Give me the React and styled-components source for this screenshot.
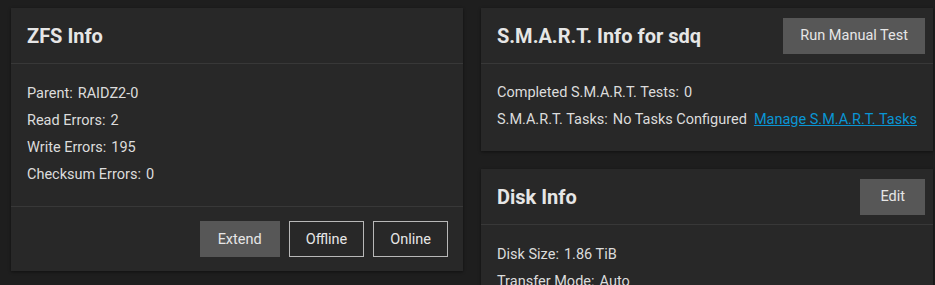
import React from 'react'
import styled, { createGlobalStyle } from 'styled-components'

const GlobalStyle = createGlobalStyle`
  html, body {
    margin: 0;
    padding: 0;
    background: #1e1e1e;
    overflow: hidden;
  }
  body {
    font-family: Roboto, "Noto Sans", sans-serif;
    color: #e0e0e0;
  }
`

const Page = styled.div`
  display: grid;
  grid-template-columns: 452px 452px;
  column-gap: 18px;
  align-items: start;
  padding: 8px 0 0 11px;
`

const Column = styled.div`
  display: flex;
  flex-direction: column;
  gap: 18px;
`

const Card = styled.section`
  background: #282828;
  box-shadow: 0 1px 3px rgba(0, 0, 0, 0.45);
`

const Header = styled.header`
  height: 56px;
  box-sizing: border-box;
  display: flex;
  align-items: center;
  justify-content: space-between;
  padding: 0 8px 0 16px;
  border-bottom: 1px solid #383838;
`

const Title = styled.h2`
  margin: 0;
  font-size: 20px;
  font-weight: 700;
  color: #e6e6e6;
`

const Body = styled.div`
  padding: ${({ top }) => top || 15}px 16px ${({ bottom }) => bottom || 18}px;
`

const Row = styled.div`
  height: 27px;
  display: flex;
  align-items: center;
  font-size: 14.5px;
  color: #dcdcdc;
`

const Label = styled.span`
  margin-right: 5px;
`

const Link = styled.a`
  margin-left: auto;
  color: #0a95d4;
  text-decoration: underline;
  cursor: pointer;
`

const Footer = styled.footer`
  display: flex;
  justify-content: flex-end;
  align-items: center;
  gap: 9px;
  padding: 14px 15px 14px;
  border-top: 1px solid #383838;
`

const Button = styled.button`
  height: 36px;
  padding: 0 ${({ pad }) => pad || 16}px;
  font-family: inherit;
  font-size: 14.5px;
  color: #e6e6e6;
  cursor: pointer;
  border: 1px solid ${({ outlined }) => (outlined ? '#b8b8b8' : '#575757')};
  background: ${({ outlined }) => (outlined ? 'transparent' : '#575757')};
`

const Field = ({ label, value, children }) => (
  <Row>
    <Label>{label}:</Label>
    {value}
    {children}
  </Row>
)

export default function App() {
  return (
    <>
      <GlobalStyle />
      <Page>
        <Card>
          <Header>
            <Title>ZFS Info</Title>
          </Header>
          <Body top={16} bottom={18}>
            <Field label="Parent" value="RAIDZ2-0" />
            <Field label="Read Errors" value="2" />
            <Field label="Write Errors" value="195" />
            <Field label="Checksum Errors" value="0" />
          </Body>
          <Footer>
            <Button pad={17}>Extend</Button>
            <Button outlined>Offline</Button>
            <Button outlined>Online</Button>
          </Footer>
        </Card>
        <Column>
          <Card>
            <Header>
              <Title>S.M.A.R.T. Info for sdq</Title>
              <Button>Run Manual Test</Button>
            </Header>
            <Body>
              <Field label="Completed S.M.A.R.T. Tests" value="0" />
              <Field label="S.M.A.R.T. Tasks" value="No Tasks Configured">
                <Link>Manage S.M.A.R.T. Tasks</Link>
              </Field>
            </Body>
          </Card>
          <Card>
            <Header>
              <Title>Disk Info</Title>
              <Button pad={19}>Edit</Button>
            </Header>
            <Body top={16}>
              <Field label="Disk Size" value="1.86 TiB" />
              <Field label="Transfer Mode" value="Auto" />
              <Field label="Serial" value="ZFL0A1B2" />
              <Field label="Model" value="ST2000DM008" />
            </Body>
          </Card>
        </Column>
      </Page>
    </>
  )
}
